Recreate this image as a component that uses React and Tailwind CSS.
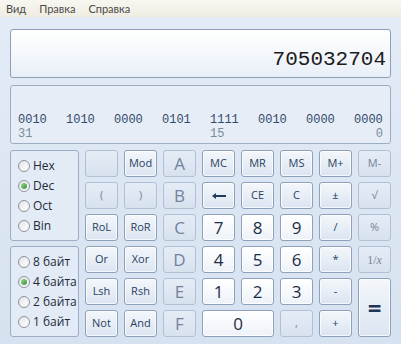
const SANS = { fontFamily: '"Open Sans", "Noto Sans", sans-serif' };

const base = "flex items-center justify-center rounded-[3px] border select-none";
const styles = {
  op: "border-[#8ea1bb] bg-gradient-to-b from-[#f4f7fb] to-[#dbe5f2] text-[#2a3f5e] shadow-[inset_0_0_0_1px_rgba(255,255,255,0.7)]",
  num: "border-[#8ea1bb] bg-gradient-to-b from-[#ffffff] to-[#edf2f9] text-[#1e2d45] shadow-[inset_0_0_0_1px_rgba(255,255,255,0.9)]",
  off: "border-[#b1c0d4] bg-gradient-to-b from-[#e4ecf6] to-[#d8e2ef] text-[#74839a]",
};

function Btn({ kind = "op", size = "text-[11px]", className = "", children }) {
  return (
    <div className={`${base} ${styles[kind]} ${size} ${className}`} style={SANS}>
      {children}
    </div>
  );
}

function Radio({ label, checked }) {
  return (
    <div className="flex items-center gap-[3px] h-[20px]">
      <div className="w-[12px] h-[12px] rounded-full border border-[#8b939c] bg-gradient-to-br from-[#e2e5e8] to-[#ffffff] flex items-center justify-center">
        {checked && (
          <div className="w-[6px] h-[6px] rounded-full bg-gradient-to-br from-[#8ee08a] to-[#2f8f3a]" />
        )}
      </div>
      <span className="text-[12px] text-[#1f2a36] leading-none">{label}</span>
    </div>
  );
}

function Arrow() {
  return (
    <svg width="16" height="8" viewBox="0 0 16 8">
      <path d="M1 4 L5 1 L5 3 L15 3 L15 5 L5 5 L5 7 Z" fill="#243a5a" />
    </svg>
  );
}

export default function App() {
  const groups = ["0010", "1010", "0000", "0101", "1111", "0010", "0000", "0000"];

  return (
    <div className="w-[401px] h-[344px] overflow-hidden bg-gradient-to-b from-[#e3ecf7] to-[#d7e2f0]" style={SANS}>
      <div
        className="h-[17px] bg-gradient-to-b from-[#f7f6f0] to-[#efede2] flex items-center gap-[13px] pl-[6px] text-[11px] text-[#4a4a4a] leading-none"
        style={{ fontFamily: 'Lato, "Open Sans", sans-serif' }}
      >
        <span>Вид</span>
        <span>Правка</span>
        <span>Справка</span>
      </div>

      <div className="px-[10px] pt-[12px] flex flex-col">
        <div className="h-[49px] rounded-[3px] border border-[#8e9eb4] bg-gradient-to-b from-[#ffffff] to-[#e9eff8] flex items-end justify-end pr-[4px] pb-[7px]">
          <span className="text-[21px] leading-none text-[#1b1b1b]" style={{ fontFamily: '"Liberation Mono", monospace' }}>
            705032704
          </span>
        </div>

        <div
          className="mt-[7px] h-[59px] rounded-[3px] border border-[#9cadc4] bg-[#e6edf7] flex flex-col justify-end pl-[7px] pb-[3px] text-[12px] leading-[12px]"
          style={{ fontFamily: '"Liberation Mono", monospace' }}
        >
          <div className="grid grid-cols-[repeat(8,29px)] gap-x-[19px] text-[#34496b]">
            {groups.map((g, i) => (
              <span key={i}>{g}</span>
            ))}
          </div>
          <div className="grid grid-cols-[repeat(8,29px)] gap-x-[19px] text-[#7b899c] mt-[2px]">
            <span>31</span>
            <span />
            <span />
            <span />
            <span>15</span>
            <span />
            <span />
            <span className="text-right">0</span>
          </div>
        </div>

        <div className="mt-[6px] flex gap-[6px]">
          <div className="w-[72px] flex flex-col gap-[5px]">
            <div className="h-[91px] rounded-[3px] border border-[#9cadc4] bg-[#e3ebf6] flex flex-col justify-center pl-[7px]">
              <Radio label="Hex" />
              <Radio label="Dec" checked />
              <Radio label="Oct" />
              <Radio label="Bin" />
            </div>
            <div className="h-[91px] rounded-[3px] border border-[#9cadc4] bg-[#e3ebf6] flex flex-col justify-center pl-[7px]">
              <Radio label="8 байт" />
              <Radio label="4 байта" checked />
              <Radio label="2 байта" />
              <Radio label="1 байт" />
            </div>
          </div>

          <div className="grid grid-cols-[repeat(8,33px)] grid-rows-[repeat(6,27px)] gap-x-[6px] gap-y-[5px]">
            <Btn kind="off" />
            <Btn>Mod</Btn>
            <Btn kind="off" size="text-[17px]">A</Btn>
            <Btn>MC</Btn>
            <Btn>MR</Btn>
            <Btn>MS</Btn>
            <Btn>M+</Btn>
            <Btn kind="off">M-</Btn>

            <Btn kind="off">(</Btn>
            <Btn kind="off">)</Btn>
            <Btn kind="off" size="text-[17px]">B</Btn>
            <Btn><Arrow /></Btn>
            <Btn>CE</Btn>
            <Btn>C</Btn>
            <Btn>±</Btn>
            <Btn kind="off">√</Btn>

            <Btn>RoL</Btn>
            <Btn>RoR</Btn>
            <Btn kind="off" size="text-[17px]">C</Btn>
            <Btn kind="num" size="text-[17px]">7</Btn>
            <Btn kind="num" size="text-[17px]">8</Btn>
            <Btn kind="num" size="text-[17px]">9</Btn>
            <Btn>/</Btn>
            <Btn kind="off">%</Btn>

            <Btn>Or</Btn>
            <Btn>Xor</Btn>
            <Btn kind="off" size="text-[17px]">D</Btn>
            <Btn kind="num" size="text-[17px]">4</Btn>
            <Btn kind="num" size="text-[17px]">5</Btn>
            <Btn kind="num" size="text-[17px]">6</Btn>
            <Btn>*</Btn>
            <Btn kind="off" size="text-[12px]">
              <span style={{ fontFamily: '"Liberation Serif", serif' }}>
                1/<i>x</i>
              </span>
            </Btn>

            <Btn>Lsh</Btn>
            <Btn>Rsh</Btn>
            <Btn kind="off" size="text-[17px]">E</Btn>
            <Btn kind="num" size="text-[17px]">1</Btn>
            <Btn kind="num" size="text-[17px]">2</Btn>
            <Btn kind="num" size="text-[17px]">3</Btn>
            <Btn>-</Btn>
            <Btn className="row-span-2" size="text-[24px] font-bold">
              <span className="text-[#1f3556]">=</span>
            </Btn>

            <Btn>Not</Btn>
            <Btn>And</Btn>
            <Btn kind="off" size="text-[17px]">F</Btn>
            <Btn kind="num" size="text-[17px]" className="col-span-2">0</Btn>
            <Btn kind="off">,</Btn>
            <Btn>+</Btn>
          </div>
        </div>
      </div>
    </div>
  );
}
